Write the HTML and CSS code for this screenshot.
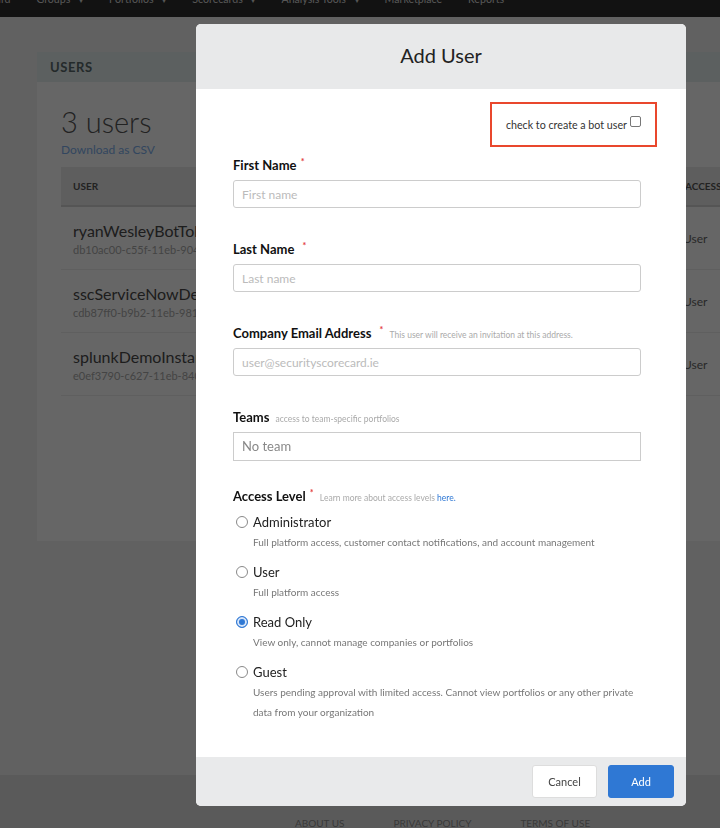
FILE: index.html
```html
<!DOCTYPE html>
<html lang="en">
<head>
    <meta charset="UTF-8">
    <meta name="viewport" content="width=device-width, initial-scale=1.0">
    <title>Users - Add User</title>
    <link rel="stylesheet" href="styles.css">
</head>
<body>
    <nav class="topnav">
        <ul>
            <li>Dashboard</li>
            <li>Groups <span class="caret">▾</span></li>
            <li>Portfolios <span class="caret">▾</span></li>
            <li>Scorecards <span class="caret">▾</span></li>
            <li>Analysis Tools <span class="caret">▾</span></li>
            <li>Marketplace</li>
            <li>Reports</li>
        </ul>
    </nav>

    <main class="page">
        <section class="panel">
            <div class="panel-head">USERS</div>
            <div class="panel-body">
                <h1 class="count">3 users</h1>
                <a class="csv" href="#">Download as CSV</a>
                <div class="table">
                    <div class="row head">
                        <div class="cell-user">USER</div>
                        <div class="cell-access">ACCESS</div>
                    </div>
                    <div class="row">
                        <div class="cell-user">
                            <p class="uname">ryanWesleyBotToken</p>
                            <p class="uid">db10ac00-c55f-11eb-904d-5b0e2a19c4f1</p>
                        </div>
                        <div class="cell-access">User</div>
                    </div>
                    <div class="row">
                        <div class="cell-user">
                            <p class="uname">sscServiceNowDemo</p>
                            <p class="uid">cdb87ff0-b9b2-11eb-981f-7b1c8d0a22e3</p>
                        </div>
                        <div class="cell-access">User</div>
                    </div>
                    <div class="row">
                        <div class="cell-user">
                            <p class="uname">splunkDemoInstance</p>
                            <p class="uid">e0ef3790-c627-11eb-8408-3f9e6a7b10c2</p>
                        </div>
                        <div class="cell-access">User</div>
                    </div>
                </div>
            </div>
        </section>
    </main>

    <footer class="footer">
        <a href="#">ABOUT US</a>
        <a href="#">PRIVACY POLICY</a>
        <a href="#">TERMS OF USE</a>
    </footer>

    <div class="overlay"></div>

    <div class="modal">
        <div class="modal-head">Add User</div>
        <div class="modal-body">
            <div class="bot-row">
                <label class="bot-box">check to create a bot user <input type="checkbox" class="check"></label>
            </div>

            <div class="field">
                <div class="label">First Name <span class="req">*</span></div>
                <input class="input" type="text" placeholder="First name">
            </div>
            <div class="field">
                <div class="label">Last Name <span class="req wide">*</span></div>
                <input class="input" type="text" placeholder="Last name">
            </div>
            <div class="field">
                <div class="label">Company Email Address <span class="req wide">*</span> <span class="hint">This user will receive an invitation at this address.</span></div>
                <input class="input" type="text" placeholder="user@securityscorecard.ie">
            </div>
            <div class="field teams">
                <div class="label">Teams <span class="hint">access to team-specific portfolios</span></div>
                <div class="select">No team</div>
            </div>

            <div class="label">Access Level <span class="req">*</span> <span class="hint">Learn more about access levels <a href="#">here.</a></span></div>
            <div class="levels">
                <label class="level">
                    <input type="radio" name="level" class="radio">
                    <span class="level-text">
                        <span class="level-name">Administrator</span>
                        <span class="level-desc">Full platform access, customer contact notifications, and account management</span>
                    </span>
                </label>
                <label class="level">
                    <input type="radio" name="level" class="radio">
                    <span class="level-text">
                        <span class="level-name">User</span>
                        <span class="level-desc">Full platform access</span>
                    </span>
                </label>
                <label class="level">
                    <input type="radio" name="level" class="radio" checked>
                    <span class="level-text">
                        <span class="level-name">Read Only</span>
                        <span class="level-desc">View only, cannot manage companies or portfolios</span>
                    </span>
                </label>
                <label class="level">
                    <input type="radio" name="level" class="radio">
                    <span class="level-text">
                        <span class="level-name">Guest</span>
                        <span class="level-desc">Users pending approval with limited access. Cannot view portfolios or any other private data from your organization</span>
                    </span>
                </label>
            </div>
        </div>
        <div class="modal-foot">
            <button class="btn">Cancel</button>
            <button class="btn primary">Add</button>
        </div>
    </div>
</body>
</html>
```
FILE: styles.css
```css
* {
    margin: 0;
    padding: 0;
    box-sizing: border-box;
}
body {
    background: #f2f2f2;
    font-family: Lato, "Open Sans", sans-serif;
    color: #333;
    overflow: hidden;
}
a {
    text-decoration: none;
}

/* page underneath the dialog */
.topnav {
    height: 17px;
    background: #2e2e2e;
    overflow: hidden;
}
.topnav ul {
    list-style: none;
    display: flex;
    gap: 26px;
    margin: -8px 0 0 -40px;
    font-size: 10.6px;
    line-height: 14px;
    color: #d8d8d8;
}
.caret {
    font-size: 8px;
    margin-left: 6px;
}
.page {
    height: 758px;
    padding-top: 35px;
    padding-left: 37px;
}
.panel {
    width: 720px;
    height: 489px;
    background: #fff;
}
.panel-head {
    height: 30px;
    line-height: 30px;
    padding-left: 13px;
    background: #e6f1f1;
    color: #5a6a6c;
    font-size: 13px;
    font-weight: 700;
    letter-spacing: 0.6px;
}
.panel-body {
    padding: 23px 0 0 24px;
}
.count {
    font-size: 29px;
    font-weight: 300;
    color: #555;
    line-height: 34px;
}
.csv {
    display: block;
    font-size: 12px;
    color: #7eb0ee;
    margin-top: 3px;
}
.table {
    margin-top: 10px;
}
.row {
    display: flex;
    height: 63px;
    align-items: center;
    border-bottom: 1px solid #ededed;
}
.row.head {
    height: 40px;
    background: #ececec;
    border-bottom: 2px solid #d5d5d5;
    font-size: 10px;
    font-weight: 700;
    color: #555;
}
.cell-user {
    width: 622px;
    padding-left: 12px;
}
.cell-access {
    font-size: 12px;
    color: #666;
}
.row.head .cell-access {
    font-size: 10px;
    color: #555;
    margin-left: 2px;
}
.uname {
    font-size: 16px;
    color: #4a4a4a;
}
.uid {
    font-size: 11px;
    color: #aaa;
    margin-top: 3px;
}
.footer {
    height: 53px;
    background: #e2e2e2;
    display: flex;
    gap: 49px;
    padding: 42px 0 0 295px;
    font-size: 10px;
}
.footer a {
    color: #8e8e8e;
}

/* dialog */
.overlay {
    position: fixed;
    inset: 0;
    background: rgba(0, 0, 0, 0.6);
}
.modal {
    position: fixed;
    top: 24px;
    left: 196px;
    width: 490px;
    height: 782px;
    background: #fff;
    border-radius: 5px;
    overflow: hidden;
    display: flex;
    flex-direction: column;
}
.modal-head {
    height: 65px;
    flex: none;
    background: #e8e9ea;
    text-align: center;
    line-height: 63px;
    font-size: 20px;
    color: #222;
}
.modal-body {
    flex: 1;
    padding: 13px 45px 0 37px;
}
.bot-row {
    display: flex;
    justify-content: flex-end;
    margin-right: -16px;
    margin-bottom: 10px;
}
.bot-box {
    width: 167px;
    height: 45px;
    border: 2px solid #e9472d;
    display: flex;
    align-items: center;
    justify-content: flex-end;
    padding: 0 14px 1px 0;
    font-size: 10.7px;
    color: #333;
}
.check {
    appearance: none;
    width: 11px;
    height: 11px;
    border: 1px solid #777;
    border-radius: 2px;
    margin: -5px 0 0 3px;
    background: #fff;
}
.field {
    margin-bottom: 33px;
}
.field.teams {
    margin-bottom: 27px;
}
.label {
    height: 16px;
    font-size: 13px;
    font-weight: 700;
    color: #111;
    line-height: 16px;
    margin-bottom: 7px;
    white-space: nowrap;
}
.req {
    color: #e23b3b;
    font-size: 9px;
    line-height: 0;
    vertical-align: 5px;
    margin-left: 1px;
}
.req.wide {
    margin-left: 5px;
}
.hint {
    font-size: 8.5px;
    font-weight: 400;
    line-height: 0;
    color: #aaa;
    margin-left: 3px;
}
.hint a {
    color: #2f78d4;
}
.input {
    display: block;
    width: 100%;
    height: 28px;
    border: 1px solid #ccc;
    border-radius: 3px;
    padding: 0 8px;
    font-family: inherit;
    font-size: 12px;
    color: #333;
    outline: 0;
}
.input::placeholder {
    color: #bbb;
}
.select {
    height: 29px;
    border: 1px solid #ccc;
    line-height: 27px;
    padding-left: 8px;
    font-size: 13px;
    color: #888;
}
.levels {
    margin-top: 8px;
}
.level {
    display: flex;
    align-items: flex-start;
    margin-bottom: 10px;
}
.radio {
    appearance: none;
    flex: none;
    width: 12px;
    height: 12px;
    border: 1px solid #888;
    border-radius: 50%;
    background: #fff;
    margin: 4px 5px 0 3px;
}
.radio:checked {
    border-color: #2f78d4;
    background: #2f78d4;
    box-shadow: inset 0 0 0 2px #d6e5fa;
}
.level-text {
    display: flex;
    flex-direction: column;
}
.level-name {
    font-size: 13px;
    color: #222;
    line-height: 20px;
}
.level-desc {
    font-size: 10px;
    color: #777;
    line-height: 20px;
}
.modal-foot {
    height: 49px;
    flex: none;
    background: #e9eaeb;
    display: flex;
    justify-content: flex-end;
    align-items: center;
    gap: 11px;
    padding-right: 12px;
}
.btn {
    width: 65px;
    height: 33px;
    border: 1px solid #ddd;
    border-radius: 3px;
    background: #fff;
    font-family: inherit;
    font-size: 11px;
    color: #444;
}
.btn.primary {
    width: 66px;
    background: #2f78d4;
    border-color: #2f78d4;
    color: #fff;
}
```
